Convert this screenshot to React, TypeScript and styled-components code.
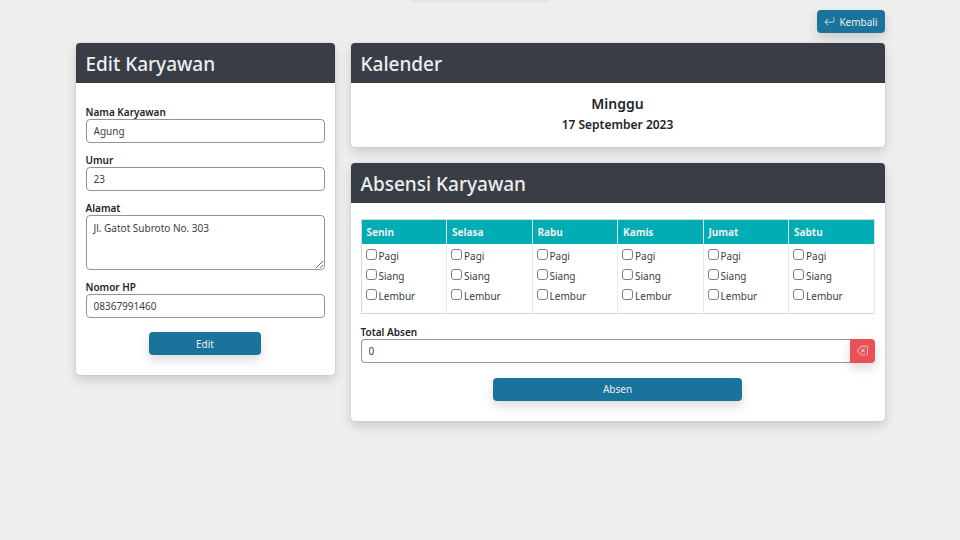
import React, { useState } from "react";
import styled, { createGlobalStyle } from "styled-components";

const GlobalStyle = createGlobalStyle`
  *, *::before, *::after { box-sizing: border-box; }
  body {
    margin: 0;
    background: #eeeeee;
    color: #212529;
    font-family: "Segoe UI", "Noto Sans", "Open Sans", sans-serif;
    font-size: 10px;
    line-height: 16px;
  }
`;

const Toast = styled.div`
  position: fixed;
  top: -30px;
  left: 50%;
  width: 138px;
  height: 28px;
  transform: translateX(-50%);
  border-radius: 4px;
  background: #eeeeee;
  box-shadow: 0 2px 4px rgba(0, 0, 0, 0.15);
`;

const Page = styled.main`
  max-width: 825px;
  margin: 0 auto;
  padding: 10px 8px 24px;
`;

const TopBar = styled.div`
  display: flex;
  justify-content: flex-end;
  margin-bottom: 10px;
`;

const Columns = styled.div`
  display: grid;
  grid-template-columns: repeat(12, minmax(0, 1fr));
  column-gap: 16px;
  align-items: start;
`;

const Column = styled.div<{ $span: number }>`
  grid-column: span ${(p) => p.$span};
  display: flex;
  flex-direction: column;
  gap: 16px;
`;

const Card = styled.section`
  border-radius: 4px;
  background: #ffffff;
  box-shadow: 0 5px 11px rgba(0, 0, 0, 0.15), 0 0 1px rgba(0, 0, 0, 0.3);
  overflow: hidden;
`;

const CardHeader = styled.header`
  padding: 7px 10px 5px;
  background: #393e46;
  color: #eeeeee;
`;

const CardTitle = styled.h1`
  margin: 0;
  font-size: 19px;
  font-weight: 500;
  line-height: 28px;
`;

const FormBody = styled.form`
  display: flex;
  flex-direction: column;
  gap: 10px;
  padding: 22px 10px 20px;
`;

const AttendanceBody = styled(FormBody)`
  gap: 11px;
  padding: 16px 10px 20px;
`;

const Field = styled.div`
  display: flex;
  flex-direction: column;
`;

const Label = styled.label`
  align-self: flex-start;
  font-weight: 600;
  line-height: 14px;
`;

const TextInput = styled.input`
  width: 100%;
  min-width: 0;
  height: 24px;
  padding: 0 7px;
  border: 1px solid #929496;
  border-radius: 4px;
  background: #ffffff;
  color: #393e46;
  font: inherit;
`;

const TextArea = styled.textarea`
  width: 100%;
  height: 55px;
  padding: 4px 7px;
  border: 1px solid #929496;
  border-radius: 4px;
  background: #ffffff;
  color: #393e46;
  font: inherit;
  resize: vertical;
`;

const InputGroup = styled.div`
  display: flex;

  ${TextInput} {
    flex: 1;
    border-right: 0;
    border-radius: 4px 0 0 4px;
  }
`;

const Button = styled.button<{ $width?: string }>`
  display: inline-flex;
  align-items: center;
  justify-content: center;
  gap: 4px;
  width: ${(p) => p.$width ?? "auto"};
  height: 23px;
  padding: 0 7px;
  border: 0;
  border-radius: 4px;
  background: #19739a;
  color: #eeeeee;
  font: inherit;
  box-shadow: 0 5px 11px rgba(0, 0, 0, 0.15);
  cursor: pointer;
`;

const SubmitButton = styled(Button)`
  align-self: center;
  margin-top: 4px;
`;

const ClearButton = styled(Button)`
  width: 25px;
  height: 24px;
  padding: 0;
  border-radius: 0 4px 4px 0;
  background: #eb5055;
`;

const DateBlock = styled.div`
  padding: 11px 10px;
  text-align: center;
`;

const DayName = styled.h2`
  margin: 0;
  font-size: 14px;
  font-weight: 600;
  line-height: 20px;
`;

const FullDate = styled.p`
  margin: 0;
  font-size: 12px;
  font-weight: 600;
  line-height: 22px;
`;

const Table = styled.table`
  width: 100%;
  table-layout: fixed;
  border-collapse: collapse;
  border: 1px solid #d3d7da;
`;

const HeadCell = styled.th`
  height: 24px;
  padding: 0 5px;
  border-right: 1px solid #dee2e6;
  background: #00adb5;
  color: #eeeeee;
  font-weight: 700;
  text-align: left;
`;

const DayCell = styled.td`
  padding: 2px 4px 7px;
  border-right: 1px solid #e6e9eb;
`;

const Check = styled.label`
  display: flex;
  align-items: center;
  gap: 2px;
  height: 20px;
  color: #393e46;
`;

const CheckBox = styled.input`
  appearance: none;
  flex: none;
  width: 11px;
  height: 11px;
  margin: 0 0 2px;
  border: 1px solid #7c7f83;
  border-radius: 3px;
  background: #ffffff;

  &:checked {
    border-color: #19739a;
    background: #19739a;
  }
`;

const ReturnIcon = () => (
  <svg width="11" height="11" viewBox="0 0 16 16" fill="currentColor" aria-hidden="true">
    <path
      fillRule="evenodd"
      d="M14.5 1.5a.5.5 0 0 1 .5.5v4.8a2.5 2.5 0 0 1-2.5 2.5H2.7l3.347 3.346a.5.5 0 0 1-.708.708l-4.2-4.2a.5.5 0 0 1 0-.708l4-4a.5.5 0 1 1 .708.708L2.7 8.3h9.8A1.5 1.5 0 0 0 14 6.8V2a.5.5 0 0 1 .5-.5z"
    />
  </svg>
);

const BackspaceIcon = () => (
  <svg width="11" height="11" viewBox="0 0 16 16" fill="currentColor" aria-hidden="true">
    <path d="M5.83 5.146a.5.5 0 0 0 0 .708L7.975 8l-2.147 2.146a.5.5 0 0 0 .707.708l2.147-2.147 2.146 2.147a.5.5 0 0 0 .707-.708L9.39 8l2.146-2.146a.5.5 0 0 0-.707-.708L8.683 7.293 6.536 5.146a.5.5 0 0 0-.707 0z" />
    <path d="M13.683 1a2 2 0 0 1 2 2v10a2 2 0 0 1-2 2h-7.08a2 2 0 0 1-1.519-.698L.241 8.65a1 1 0 0 1 0-1.302L5.084 1.7A2 2 0 0 1 6.603 1h7.08zm-7.08 1a1 1 0 0 0-.76.35L1 8l4.844 5.65a1 1 0 0 0 .759.35h7.08a1 1 0 0 0 1-1V3a1 1 0 0 0-1-1h-7.08z" />
  </svg>
);

const DAYS = ["Senin", "Selasa", "Rabu", "Kamis", "Jumat", "Sabtu"];
const SHIFTS = ["Pagi", "Siang", "Lembur"];

export default function App() {
  const [checked, setChecked] = useState<Record<string, boolean>>({});
  const total = Object.values(checked).filter(Boolean).length;

  return (
    <>
      <GlobalStyle />
      <Toast />
      <Page>
        <TopBar>
          <Button type="button">
            <ReturnIcon />
            Kembali
          </Button>
        </TopBar>
        <Columns>
          <Column $span={4}>
            <Card>
              <CardHeader>
                <CardTitle>Edit Karyawan</CardTitle>
              </CardHeader>
              <FormBody onSubmit={(e) => e.preventDefault()}>
                <Field>
                  <Label htmlFor="nama">Nama Karyawan</Label>
                  <TextInput id="nama" defaultValue="Agung" />
                </Field>
                <Field>
                  <Label htmlFor="umur">Umur</Label>
                  <TextInput id="umur" defaultValue="23" />
                </Field>
                <Field>
                  <Label htmlFor="alamat">Alamat</Label>
                  <TextArea id="alamat" defaultValue="Jl. Gatot Subroto No. 303" />
                </Field>
                <Field>
                  <Label htmlFor="hp">Nomor HP</Label>
                  <TextInput id="hp" type="tel" defaultValue="08367991460" />
                </Field>
                <SubmitButton $width="47%">Edit</SubmitButton>
              </FormBody>
            </Card>
          </Column>
          <Column $span={8}>
            <Card>
              <CardHeader>
                <CardTitle>Kalender</CardTitle>
              </CardHeader>
              <DateBlock>
                <DayName>Minggu</DayName>
                <FullDate>17 September 2023</FullDate>
              </DateBlock>
            </Card>
            <Card>
              <CardHeader>
                <CardTitle>Absensi Karyawan</CardTitle>
              </CardHeader>
              <AttendanceBody onSubmit={(e) => e.preventDefault()}>
                <Table>
                  <thead>
                    <tr>
                      {DAYS.map((day) => (
                        <HeadCell key={day} scope="col">
                          {day}
                        </HeadCell>
                      ))}
                    </tr>
                  </thead>
                  <tbody>
                    <tr>
                      {DAYS.map((day) => (
                        <DayCell key={day}>
                          {SHIFTS.map((shift) => {
                            const id = `${day}-${shift}`;
                            return (
                              <Check key={id} htmlFor={id}>
                                <CheckBox
                                  id={id}
                                  type="checkbox"
                                  checked={!!checked[id]}
                                  onChange={(e) =>
                                    setChecked({ ...checked, [id]: e.target.checked })
                                  }
                                />
                                {shift}
                              </Check>
                            );
                          })}
                        </DayCell>
                      ))}
                    </tr>
                  </tbody>
                </Table>
                <Field>
                  <Label htmlFor="total">Total Absen</Label>
                  <InputGroup>
                    <TextInput id="total" value={total} readOnly />
                    <ClearButton
                      type="button"
                      aria-label="Hapus"
                      onClick={() => setChecked({})}
                    >
                      <BackspaceIcon />
                    </ClearButton>
                  </InputGroup>
                </Field>
                <SubmitButton $width="calc(50% - 8px)">Absen</SubmitButton>
              </AttendanceBody>
            </Card>
          </Column>
        </Columns>
      </Page>
    </>
  );
}
